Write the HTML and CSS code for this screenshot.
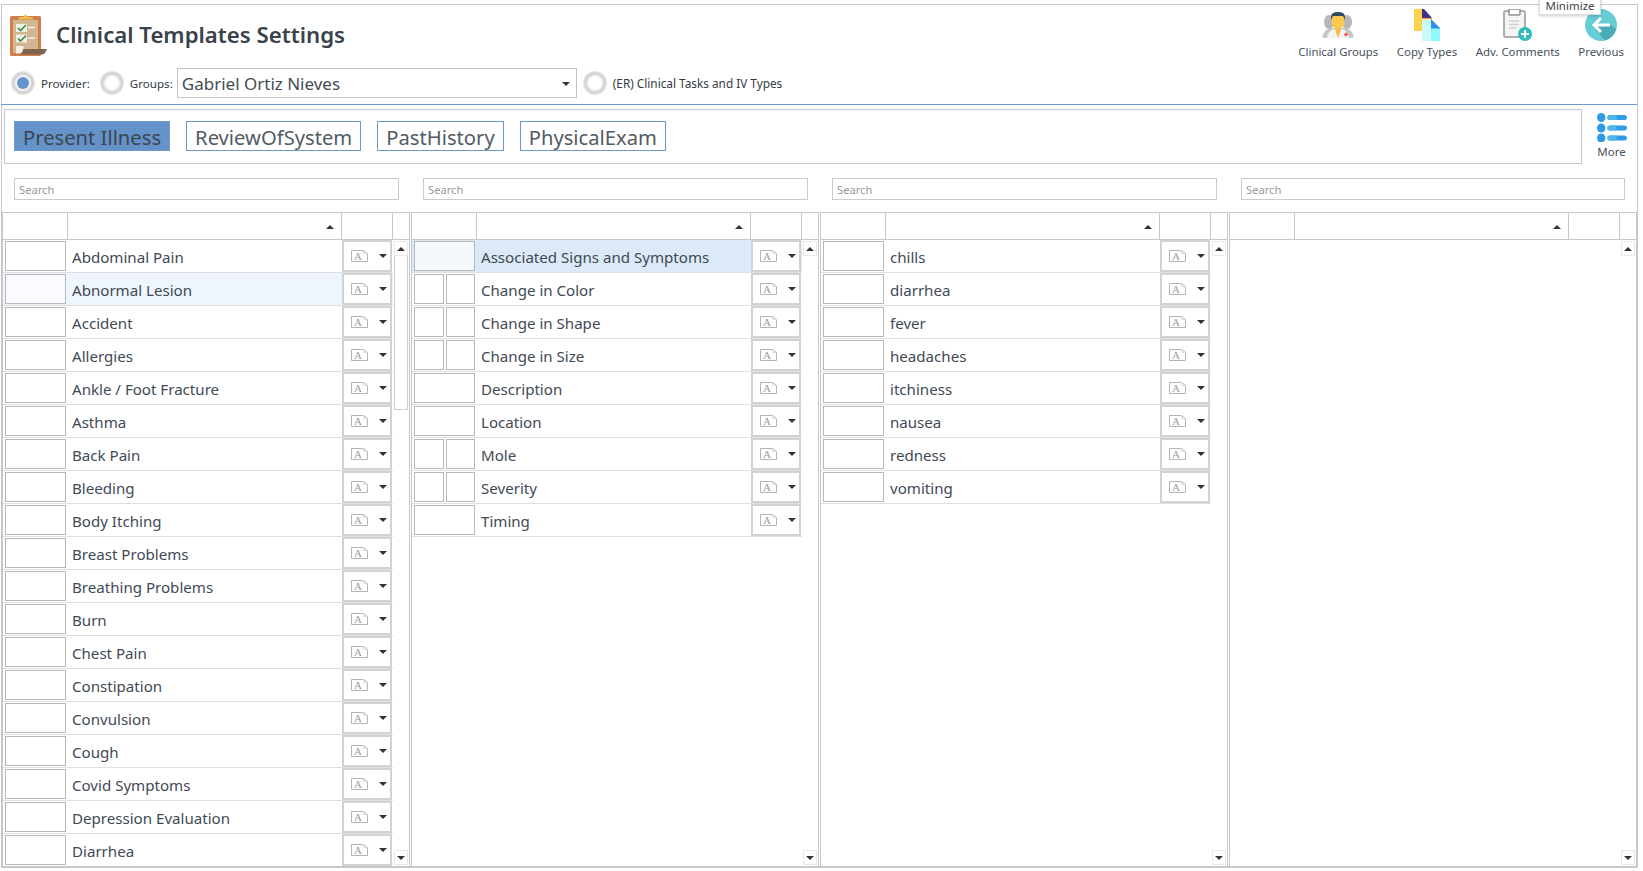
FILE: index.html
```html
<!DOCTYPE html>
<html lang="en">
<head>
<meta charset="utf-8">
<title>Clinical Templates Settings</title>
<link rel="stylesheet" href="styles.css">
</head>
<body>
<svg class="defs" width="0" height="0" aria-hidden="true">
  <symbol id="doc-a" viewBox="0 0 17 12">
    <path d="M.5.5H12.500L16.500 3.500V11.500H.5Z" fill="#fff" stroke="#b4b4b4"/>
    <path d="M12.500.5V3.500H16.500" fill="none" stroke="#dcdcdc"/>
    <text x="7" y="9.800" font-family="Liberation Serif" font-size="11" text-anchor="middle" fill="#9c9c9c">A</text>
  </symbol>
</svg>
<div class="frame">
  <header class="top">
    <div class="brand">
      <div class="title-row">
        <svg class="clipboard" width="38" height="46" viewBox="10 12 38 46">
          <rect x="10" y="16" width="31" height="40" rx="1.500" fill="#cf7f4b"/>
          <path d="M18 19.500Q18 17 21 17H23.500Q25.500 12 28 17H30.500Q33.500 17 33.500 19.500Z" fill="#ebbd4f"/>
          <rect x="13" y="20" width="25" height="33" fill="#d2b692"/>
          <rect x="16" y="24" width="11" height="8" fill="#f3efe6"/>
          <rect x="16" y="34.500" width="11" height="8" fill="#f3efe6"/>
          <path d="M18 28l2.500 2.500L26 25M18 38.500l2.500 2.500L26 35.500" fill="none" stroke="#3f8f4f" stroke-width="1.700"/>
          <path d="M28 27.500h7M28 38h7" stroke="#f3efe6" stroke-width="1.400"/>
          <path d="M16 46h7.500v3q-1 5-7.500 4.500Z" fill="#f3efe6"/>
          <path d="M23 49H47L45 53Q44 54.500 41 54.500H20Q23 53 23 49Z" fill="#7b6551"/>
        </svg>
        <h1 class="title">Clinical Templates Settings</h1>
      </div>
      <div class="controls">
        <span class="radio on"></span><span class="lbl lbl-provider">Provider:</span>
        <span class="radio"></span><span class="lbl lbl-groups">Groups:</span>
        <div class="select"><span>Gabriel Ortiz Nieves</span><i class="caret"></i></div>
        <span class="radio"></span><span class="lbl lbl-er">(ER) Clinical Tasks and IV Types</span>
      </div>
    </div>
    <nav class="actions">
      <a class="action">
        <svg width="36" height="32" viewBox="0 0 36 32">
          <ellipse cx="9" cy="13" rx="5" ry="7" fill="#b4b8bc"/>
          <ellipse cx="27" cy="13" rx="5" ry="7" fill="#b4b8bc"/>
          <path d="M2 28Q4 21 10 19L26 19Q32 21 34 28L31 29H5Z" fill="#c4c7ca"/>
          <path d="M7 29Q8 22 14 20L18 22L22 20Q28 22 29 29Z" fill="#f4f4f2"/>
          <path d="M15.500 17h5v5l-2.500 7-2.500-7Z" fill="#f5b942"/>
          <path d="M11.500 10c0-2 1-3 3-3h7c2 0 3 1 3 3v3c0 4-3 7-6.500 7s-6.500-3-6.500-7Z" fill="#fbc950"/>
          <path d="M11 12V8q0-5 7-5t7 5v4q-1-5-3-5H14q-2 0-3 5Z" fill="#2f4c5c"/>
          <path d="M24 25.500h4M26 23.500v4" stroke="#e8534f" stroke-width="1.400"/>
        </svg>
        <span>Clinical Groups</span>
      </a>
      <a class="action">
        <svg width="26" height="32" viewBox="0 0 26 32">
          <rect x="0" y="0" width="9" height="22" fill="#fdd24e"/>
          <path d="M8 0H10L18 9V10H8Z" fill="#41308a"/>
          <rect x="8" y="9" width="10" height="1.500" fill="#f2b33d"/>
          <rect x="8" y="10.500" width="9" height="21.500" fill="#c9fbfb"/>
          <rect x="17" y="18" width="9" height="14" fill="#8ef9fb"/>
          <path d="M17 10L26 19V19.500H17Z" fill="#2f8fe6"/>
        </svg>
        <span>Copy Types</span>
      </a>
      <a class="action">
        <svg width="30" height="32" viewBox="0 0 30 32">
          <rect x="1" y="2" width="21" height="26" rx="2" fill="#f5f5f5" stroke="#aeaeae" stroke-width="2"/>
          <path d="M6 0H17V5Q17 6 16 6H7Q6 6 6 5Z" fill="#fff" stroke="#8f8f8f" stroke-width="1.500"/>
          <path d="M6 12H16M6 15.500H16M6 19H13" stroke="#cfcfcf" stroke-width="1.300"/>
          <circle cx="22" cy="25" r="7" fill="#2fbdbf"/>
          <path d="M22 21v8M18 25h8" stroke="#fff" stroke-width="2"/>
        </svg>
        <span>Adv. Comments</span>
      </a>
      <a class="action">
        <svg width="32" height="32" viewBox="0 0 32 32">
          <circle cx="16" cy="16" r="16" fill="#66ccd6"/>
          <path d="M13 16H26L31 20A16 16 0 0 1 20 31.500L8 17Z" fill="#4aabb9"/>
          <path d="M16 9L9 16L16 23M10 16H25" fill="none" stroke="#fff" stroke-width="3"/>
        </svg>
        <span>Previous</span>
      </a>
    </nav>
    <div class="tooltip">Minimize</div>
  </header>

  <div class="tab-row">
    <div class="tabs">
      <a class="tab active">Present Illness</a>
      <a class="tab">ReviewOfSystem</a>
      <a class="tab">PastHistory</a>
      <a class="tab">PhysicalExam</a>
    </div>
    <a class="more">
      <svg width="30" height="29" viewBox="0 0 32 29" preserveAspectRatio="none">
        <g fill="#2f9ae6">
          <circle cx="4.500" cy="4.500" r="4.500"/><circle cx="4.500" cy="15" r="4.500"/><circle cx="4.500" cy="25" r="4.500"/>
          <rect x="11" y="2" width="21" height="5" rx="2.500"/><rect x="11" y="12.500" width="21" height="5" rx="2.500"/><rect x="11" y="22.500" width="21" height="5" rx="2.500"/>
        </g>
        <g fill="#4fb5ec">
          <path d="M13.500 2H21V7H13.500a2.500 2.500 0 0 1 0-5Z"/><path d="M13.500 12.500H21V17.500H13.500a2.500 2.500 0 0 1 0-5Z"/><path d="M13.500 22.500H21V27.500H13.500a2.500 2.500 0 0 1 0-5Z"/>
        </g>
      </svg>
      <span>More</span>
    </a>
  </div>

  <div class="searches">
    <input class="search" placeholder="Search">
    <input class="search" placeholder="Search">
    <input class="search" placeholder="Search">
    <input class="search" placeholder="Search">
  </div>

  <div class="grids">
    <section class="grid">
      <div class="grid-head"><div></div><div class="sort"><i class="up"></i></div><div></div><div></div></div>
      <div class="grid-body">
        <div class="rows">
          <div class="row"><div class="checks"><b></b></div><div class="name">Abdominal Pain</div><div class="act"><svg><use href="#doc-a"/></svg><i class="caret"></i></div></div>
          <div class="row hover"><div class="checks"><b></b></div><div class="name">Abnormal Lesion</div><div class="act"><svg><use href="#doc-a"/></svg><i class="caret"></i></div></div>
          <div class="row"><div class="checks"><b></b></div><div class="name">Accident</div><div class="act"><svg><use href="#doc-a"/></svg><i class="caret"></i></div></div>
          <div class="row"><div class="checks"><b></b></div><div class="name">Allergies</div><div class="act"><svg><use href="#doc-a"/></svg><i class="caret"></i></div></div>
          <div class="row"><div class="checks"><b></b></div><div class="name">Ankle / Foot Fracture</div><div class="act"><svg><use href="#doc-a"/></svg><i class="caret"></i></div></div>
          <div class="row"><div class="checks"><b></b></div><div class="name">Asthma</div><div class="act"><svg><use href="#doc-a"/></svg><i class="caret"></i></div></div>
          <div class="row"><div class="checks"><b></b></div><div class="name">Back Pain</div><div class="act"><svg><use href="#doc-a"/></svg><i class="caret"></i></div></div>
          <div class="row"><div class="checks"><b></b></div><div class="name">Bleeding</div><div class="act"><svg><use href="#doc-a"/></svg><i class="caret"></i></div></div>
          <div class="row"><div class="checks"><b></b></div><div class="name">Body Itching</div><div class="act"><svg><use href="#doc-a"/></svg><i class="caret"></i></div></div>
          <div class="row"><div class="checks"><b></b></div><div class="name">Breast Problems</div><div class="act"><svg><use href="#doc-a"/></svg><i class="caret"></i></div></div>
          <div class="row"><div class="checks"><b></b></div><div class="name">Breathing Problems</div><div class="act"><svg><use href="#doc-a"/></svg><i class="caret"></i></div></div>
          <div class="row"><div class="checks"><b></b></div><div class="name">Burn</div><div class="act"><svg><use href="#doc-a"/></svg><i class="caret"></i></div></div>
          <div class="row"><div class="checks"><b></b></div><div class="name">Chest Pain</div><div class="act"><svg><use href="#doc-a"/></svg><i class="caret"></i></div></div>
          <div class="row"><div class="checks"><b></b></div><div class="name">Constipation</div><div class="act"><svg><use href="#doc-a"/></svg><i class="caret"></i></div></div>
          <div class="row"><div class="checks"><b></b></div><div class="name">Convulsion</div><div class="act"><svg><use href="#doc-a"/></svg><i class="caret"></i></div></div>
          <div class="row"><div class="checks"><b></b></div><div class="name">Cough</div><div class="act"><svg><use href="#doc-a"/></svg><i class="caret"></i></div></div>
          <div class="row"><div class="checks"><b></b></div><div class="name">Covid Symptoms</div><div class="act"><svg><use href="#doc-a"/></svg><i class="caret"></i></div></div>
          <div class="row"><div class="checks"><b></b></div><div class="name">Depression Evaluation</div><div class="act"><svg><use href="#doc-a"/></svg><i class="caret"></i></div></div>
          <div class="row"><div class="checks"><b></b></div><div class="name">Diarrhea</div><div class="act"><svg><use href="#doc-a"/></svg><i class="caret"></i></div></div>
        </div>
        <div class="scroll"><span class="sbtn"><i class="up"></i></span><span class="thumb"></span><span class="sbtn end"><i class="down"></i></span></div>
      </div>
    </section>

    <section class="grid">
      <div class="grid-head"><div></div><div class="sort"><i class="up"></i></div><div></div><div></div></div>
      <div class="grid-body">
        <div class="rows">
          <div class="row selected"><div class="checks"><b></b></div><div class="name">Associated Signs and Symptoms</div><div class="act"><svg><use href="#doc-a"/></svg><i class="caret"></i></div></div>
          <div class="row"><div class="checks"><b></b><b></b></div><div class="name">Change in Color</div><div class="act"><svg><use href="#doc-a"/></svg><i class="caret"></i></div></div>
          <div class="row"><div class="checks"><b></b><b></b></div><div class="name">Change in Shape</div><div class="act"><svg><use href="#doc-a"/></svg><i class="caret"></i></div></div>
          <div class="row"><div class="checks"><b></b><b></b></div><div class="name">Change in Size</div><div class="act"><svg><use href="#doc-a"/></svg><i class="caret"></i></div></div>
          <div class="row"><div class="checks"><b></b></div><div class="name">Description</div><div class="act"><svg><use href="#doc-a"/></svg><i class="caret"></i></div></div>
          <div class="row"><div class="checks"><b></b></div><div class="name">Location</div><div class="act"><svg><use href="#doc-a"/></svg><i class="caret"></i></div></div>
          <div class="row"><div class="checks"><b></b><b></b></div><div class="name">Mole</div><div class="act"><svg><use href="#doc-a"/></svg><i class="caret"></i></div></div>
          <div class="row"><div class="checks"><b></b><b></b></div><div class="name">Severity</div><div class="act"><svg><use href="#doc-a"/></svg><i class="caret"></i></div></div>
          <div class="row"><div class="checks"><b></b></div><div class="name">Timing</div><div class="act"><svg><use href="#doc-a"/></svg><i class="caret"></i></div></div>
        </div>
        <div class="scroll"><span class="sbtn"><i class="up"></i></span><span class="sbtn end"><i class="down"></i></span></div>
      </div>
    </section>

    <section class="grid">
      <div class="grid-head"><div></div><div class="sort"><i class="up"></i></div><div></div><div></div></div>
      <div class="grid-body">
        <div class="rows">
          <div class="row"><div class="checks"><b></b></div><div class="name">chills</div><div class="act"><svg><use href="#doc-a"/></svg><i class="caret"></i></div></div>
          <div class="row"><div class="checks"><b></b></div><div class="name">diarrhea</div><div class="act"><svg><use href="#doc-a"/></svg><i class="caret"></i></div></div>
          <div class="row"><div class="checks"><b></b></div><div class="name">fever</div><div class="act"><svg><use href="#doc-a"/></svg><i class="caret"></i></div></div>
          <div class="row"><div class="checks"><b></b></div><div class="name">headaches</div><div class="act"><svg><use href="#doc-a"/></svg><i class="caret"></i></div></div>
          <div class="row"><div class="checks"><b></b></div><div class="name">itchiness</div><div class="act"><svg><use href="#doc-a"/></svg><i class="caret"></i></div></div>
          <div class="row"><div class="checks"><b></b></div><div class="name">nausea</div><div class="act"><svg><use href="#doc-a"/></svg><i class="caret"></i></div></div>
          <div class="row"><div class="checks"><b></b></div><div class="name">redness</div><div class="act"><svg><use href="#doc-a"/></svg><i class="caret"></i></div></div>
          <div class="row"><div class="checks"><b></b></div><div class="name">vomiting</div><div class="act"><svg><use href="#doc-a"/></svg><i class="caret"></i></div></div>
        </div>
        <div class="scroll"><span class="sbtn"><i class="up"></i></span><span class="sbtn end"><i class="down"></i></span></div>
      </div>
    </section>

    <section class="grid">
      <div class="grid-head"><div></div><div class="sort"><i class="up"></i></div><div></div><div></div></div>
      <div class="grid-body">
        <div class="rows"></div>
        <div class="scroll"><span class="sbtn"><i class="up"></i></span><span class="sbtn end"><i class="down"></i></span></div>
      </div>
    </section>
  </div>
</div>
</body>
</html>
```

FILE: styles.css
```css
* { box-sizing: border-box; }
html, body { margin: 0; height: 100%; background: #fff; overflow: hidden; }
body { font-family: "Noto Sans", "Open Sans", sans-serif; color: #3f4a56; }
.defs { position: absolute; }
i, b { display: block; }

.frame {
  width: 1637px; height: 864px; margin: 4px 0 0 1px;
  border: 1px solid #c8c8c8; border-bottom-width: 2px;
  display: flex; flex-direction: column;
}

.top {
  position: relative; height: 100px; flex: none;
  border-bottom: 1px solid #6c9ad0;
  margin: 0 0 0 -1px;
  display: flex; justify-content: space-between;
}
.brand { padding: 7px 0 0 9px; }
.title-row { display: flex; align-items: center; gap: 8px; height: 46px; }
.clipboard { flex: none; }
.title { margin: 1px 0 0; font-size: 22.200px; font-weight: 600; line-height: 1; color: #3a424b; }
.controls { display: flex; align-items: center; margin: 10px 0 0 1px; height: 30px; }
.radio {
  width: 24px; height: 24px; border-radius: 50%; flex: none;
  background: radial-gradient(circle, #fff 0 6px, #d0d0d0 9.500px, #e8e8e8 12px);
  display: flex; align-items: center; justify-content: center;
}
.radio.on::before { content: ""; width: 12px; height: 12px; border-radius: 50%; background: #6693cb; }
.lbl { font-size: 11.600px; color: #333b44; white-space: nowrap; }
.lbl-provider { margin: 0 10px 0 6px; }
.lbl-groups { margin: 0 4px 0 6px; }
.lbl-er { margin-left: 6px; font-size: 11.800px; }
.select {
  width: 400px; height: 30px; border: 1px solid #c4c4c4;
  display: flex; align-items: center; justify-content: space-between;
  padding: 0 6px 0 4px; font-size: 17px; margin-right: 6px; color: #434c56;
}
.caret { width: 0; height: 0; border: 4px solid transparent; border-top: 4px solid #333; border-bottom: 0; }
.select .caret { margin-top: 2px; }

.actions { display: flex; gap: 18.500px; padding: 4px 13px 0 0; }
.action { display: flex; flex-direction: column; align-items: center; font-size: 11.400px; white-space: nowrap; color: #46505b; }
.action svg { display: block; height: 32px; margin-bottom: 3px; }
.tooltip {
  position: absolute; top: -9px; left: 1538px; width: 62px; height: 19px;
  background: #fff; border: 1px solid #ddd; box-shadow: 0 1px 3px rgba(0,0,0,.2);
  font-size: 11.500px; line-height: 17px; text-align: center; color: #444; overflow: hidden;
}

.tab-row { display: flex; margin-top: 4px; flex: none; height: 55px; padding-left: 2px; }
.tabs {
  width: 1578px; border: 1px solid #c8c8c8; display: flex; gap: 16px;
  padding: 11px 0 0 9px; height: 55px;
}
.tab {
  height: 30px; border: 1px solid #6c98cb; font-size: 20.200px; line-height: 30px;
  padding: 0 8px; color: #535b63; white-space: nowrap;
}
.tab.active { background: #6593c9; color: #3c4650; }
.more { flex: 1; display: flex; flex-direction: column; align-items: center; font-size: 11.500px; color: #46505b; padding: 4px 0 0 4px; }
.more svg { display: block; margin-bottom: 2px; }

.searches { display: flex; gap: 24px; padding-left: 12px; margin-top: 14px; flex: none; }
.search {
  width: 385px; height: 22px; border: 1px solid #cbcbcb; padding: 0 4px;
  font: 11.200px "Noto Sans", sans-serif; outline: none; background: #fff;
}
.search:last-child { width: 384px; }
.search::placeholder { color: #9a9a9a; opacity: 1; }

.grids { display: flex; gap: 1px; margin-top: 12px; flex: 1; min-height: 0; }
.grid { width: 408px; border: 1px solid #c8c8c8; border-bottom: 0; display: flex; flex-direction: column; min-height: 0; }
.grid-head { display: grid; grid-template-columns: 65px 274px 51px 1fr; height: 27px; flex: none; border-bottom: 1px solid #c8c8c8; }
.grid-head > div { border-right: 1px solid #c8c8c8; }
.grid-head > div:last-child { border-right: 0; }
.sort { display: flex; justify-content: flex-end; align-items: center; padding: 2px 7px 0 0; }
.up { width: 0; height: 0; border: 4px solid transparent; border-bottom: 4px solid #333; border-top: 0; }
.down { width: 0; height: 0; border: 4px solid transparent; border-top: 4px solid #333; border-bottom: 0; }

.grid-body { flex: 1; min-height: 0; display: flex; }
.rows { width: 390px; flex: none; overflow: hidden; }
.row { height: 33px; display: flex; border-bottom: 1px solid #dfdfdf; }
.row.hover { background: #eef5fc; }
.row.hover .checks b { background: #f9fbfe; }
.row.selected { background: #dce9f7; }
.row.selected .checks b { background: #f5f9fd; }
.checks { width: 65px; height: 32px; flex: none; display: flex; gap: 2px; padding: 1px 2px; }
.checks b { flex: 1; border: 1px solid #b8b8b8; background: #fff; height: 30px; }
.name { width: 274px; flex: none; padding-left: 4px; font-size: 15.100px; line-height: 35px; white-space: nowrap; color: #3f4a56; }
.act {
  width: 50px; height: 32px; flex: none; background: #fff;
  border: 2px solid #d2d2d2; display: flex; align-items: center; padding: 0 0 0 7px;
}
.act svg { width: 17px; height: 12px; flex: none; }
.act .caret { margin-left: 11px; }
.scroll { flex: 1; display: flex; flex-direction: column; padding: 1px; min-width: 0; }
.sbtn { height: 15px; flex: none; border: 1px solid #e8e8e8; display: flex; align-items: center; justify-content: center; background: #fff; }
.sbtn.end { margin-top: auto; }
.thumb { height: 154px; border: 1px solid #cfcfcf; border-top: 0; flex: none; }
```
